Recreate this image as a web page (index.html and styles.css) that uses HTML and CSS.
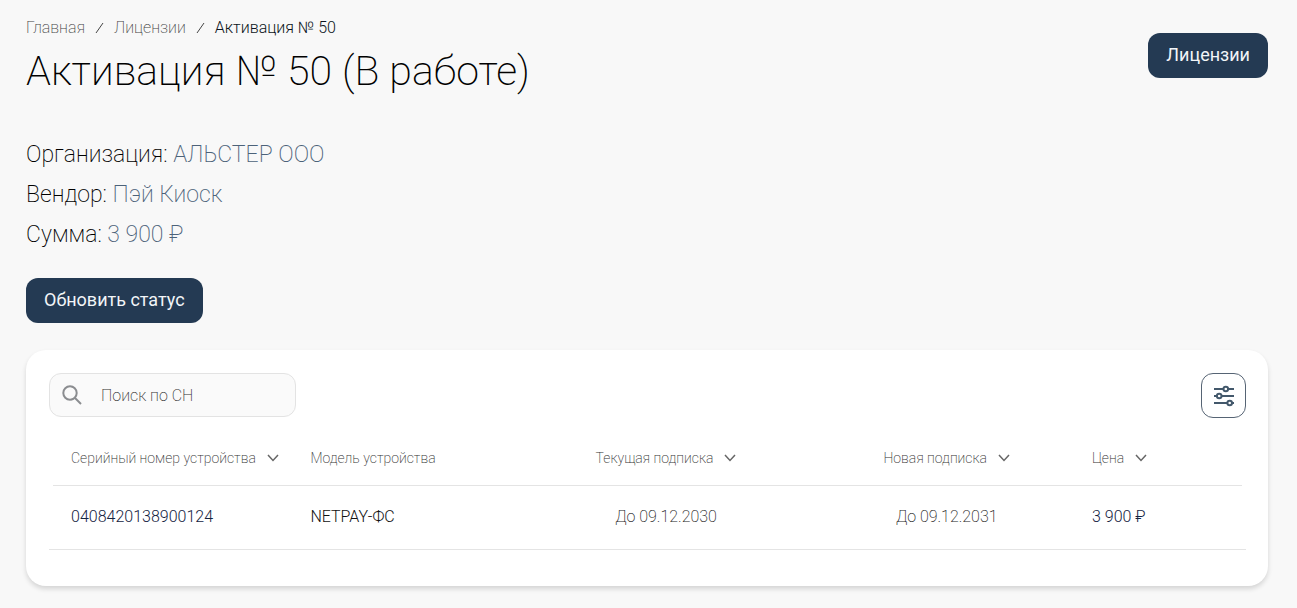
FILE: index.html
```html
<!DOCTYPE html>
<html lang="ru">
<head>
    <meta charset="UTF-8">
    <meta name="viewport" content="width=device-width, initial-scale=1.0">
    <title>Активация № 50</title>
    <link rel="stylesheet" href="styles.css">
</head>
<body>
    <header class="header">
        <div>
            <nav class="breadcrumbs">
                <a href="#">Главная</a>
                <svg class="slash" viewBox="0 0 9 12"><path d="M1 11L8 1"/></svg>
                <a href="#">Лицензии</a>
                <svg class="slash" viewBox="0 0 9 12"><path d="M1 11L8 1"/></svg>
                <span class="current">Активация № 50</span>
            </nav>
            <h1>Активация № 50 (В работе)</h1>
        </div>
        <button class="btn" type="button">Лицензии</button>
    </header>

    <main>
        <section class="info">
            <p>Организация: <span>АЛЬСТЕР ООО</span></p>
            <p>Вендор: <span>Пэй Киоск</span></p>
            <p>Сумма: <span>3 900 ₽</span></p>
        </section>
        <button class="btn" type="button">Обновить статус</button>

        <section class="card">
            <div class="toolbar">
                <label class="search">
                    <svg class="search-icon" viewBox="0 0 20 20"><circle cx="8" cy="8" r="6.7"/><path d="M13 13L19 19"/></svg>
                    <input type="text" placeholder="Поиск по СН" aria-label="Поиск по СН">
                </label>
                <button class="filter" type="button" aria-label="Фильтр">
                    <svg viewBox="0 0 22 22">
                        <path d="M1 4H10M15 4H21M1 11H4M9 11H21M1 18H14M19 18H21"/>
                        <circle cx="12.8" cy="4" r="2.3"/>
                        <circle cx="6.2" cy="11" r="2.3"/>
                        <circle cx="16.7" cy="18" r="2.3"/>
                    </svg>
                </button>
            </div>
            <table class="devices">
                <thead>
                    <tr>
                        <th class="col-serial"><button class="sort" type="button">Серийный номер устройства <svg viewBox="0 0 12 8"><path d="M1 1L6 6.5L11 1"/></svg></button></th>
                        <th class="col-model">Модель устройства</th>
                        <th class="col-current center"><button class="sort" type="button">Текущая подписка <svg viewBox="0 0 12 8"><path d="M1 1L6 6.5L11 1"/></svg></button></th>
                        <th class="col-new center"><button class="sort" type="button">Новая подписка <svg viewBox="0 0 12 8"><path d="M1 1L6 6.5L11 1"/></svg></button></th>
                        <th class="col-price"><button class="sort" type="button">Цена <svg viewBox="0 0 12 8"><path d="M1 1L6 6.5L11 1"/></svg></button></th>
                    </tr>
                </thead>
                <tbody>
                    <tr>
                        <td class="navy">0408420138900124</td>
                        <td>NETPAY-ФС</td>
                        <td class="center date">До 09.12.2030</td>
                        <td class="center date">До 09.12.2031</td>
                        <td class="navy">3 900 ₽</td>
                    </tr>
                </tbody>
            </table>
        </section>
    </main>
</body>
</html>
```
FILE: styles.css
```css
* {
    box-sizing: border-box;
}
body {
    margin: 0;
    padding: 17px 29px 20px 26px;
    background-color: #f8f8f8;
    color: #000;
    font-family: Roboto, sans-serif;
    font-weight: 200;
}
button, input {
    font-family: inherit;
}
svg {
    fill: none;
    stroke: currentColor;
}
.header {
    display: flex;
    justify-content: space-between;
    align-items: flex-start;
}
.header .btn {
    margin-top: 16px;
}
.breadcrumbs {
    display: flex;
    align-items: center;
    gap: 10px;
    font-size: 16px;
    line-height: 22px;
    color: #444;
}
.breadcrumbs a {
    color: inherit;
    text-decoration: none;
}
.breadcrumbs .current {
    color: #0b1420;
    font-weight: 300;
}
.slash {
    width: 9px;
    height: 12px;
}
h1 {
    margin: 7px 0 0;
    font-size: 41px;
    line-height: 50px;
    font-weight: 200;
}
.btn {
    height: 45px;
    padding: 0 18px 2px;
    border: none;
    border-radius: 12px;
    background-color: #243a53;
    color: #f2f5f8;
    font-size: 18px;
    font-weight: 450;
    cursor: pointer;
}
.info {
    margin: 39px 0 23px;
    font-size: 23px;
    line-height: 40px;
}
.info p {
    margin: 0;
}
.info span {
    color: #4c6279;
}
.card {
    margin-top: 27px;
    padding: 23px 22px 36px 23px;
    border-radius: 20px;
    background-color: #fff;
    box-shadow: 0 3px 5px rgba(0, 0, 0, 0.14);
}
.toolbar {
    display: flex;
    justify-content: space-between;
    margin-bottom: 13px;
}
.search {
    display: flex;
    align-items: center;
    gap: 19px;
    width: 247px;
    height: 44px;
    padding: 0 12px;
    border: 1px solid #e3e3e3;
    border-radius: 12px;
    background-color: #fafafa;
}
.search-icon {
    flex: none;
    width: 20px;
    height: 20px;
    color: #8b8d90;
    stroke-width: 2;
}
.search input {
    width: 100%;
    padding: 0;
    border: none;
    outline: none;
    background: none;
    font-size: 16px;
    font-weight: 200;
}
.search input::placeholder {
    color: #333;
}
.filter {
    display: flex;
    align-items: center;
    justify-content: center;
    width: 45px;
    height: 45px;
    padding: 0;
    border: 1px solid #566474;
    border-radius: 12px;
    background-color: #fff;
    color: #43586b;
    cursor: pointer;
}
.filter svg {
    width: 22px;
    height: 22px;
    stroke-width: 2;
}
.devices {
    width: 100%;
    table-layout: fixed;
    border-collapse: separate;
    border-spacing: 0;
}
.devices th, .devices td {
    padding: 0 0 2px 22px;
    text-align: left;
    font-weight: 200;
}
.devices th {
    height: 55px;
    font-size: 14px;
    color: #333;
}
.devices td {
    height: 64px;
    border-bottom: 1px solid #e4e4e4;
    font-size: 16px;
    font-weight: 300;
    color: #111;
}
.devices .center {
    padding-left: 0;
    text-align: center;
}
/* header line is a little shorter than the row lines */
.devices thead tr {
    background: linear-gradient(#e4e4e4, #e4e4e4) center bottom / calc(100% - 8px) 1px no-repeat;
}
.devices .navy {
    color: #14233f;
}
.devices .date {
    font-weight: 200;
    color: #1a1a1a;
}
.col-serial {
    width: 20%;
}
.col-model {
    width: 18.4%;
}
.col-current {
    width: 26.3%;
}
.col-new {
    width: 20.6%;
}
.sort {
    display: inline-flex;
    align-items: center;
    gap: 11px;
    padding: 0;
    border: none;
    background: none;
    color: inherit;
    font-size: 14px;
    font-weight: 200;
    white-space: nowrap;
    cursor: pointer;
}
.sort svg {
    width: 12px;
    height: 8px;
    color: #666;
    stroke-width: 1.5;
}
```
